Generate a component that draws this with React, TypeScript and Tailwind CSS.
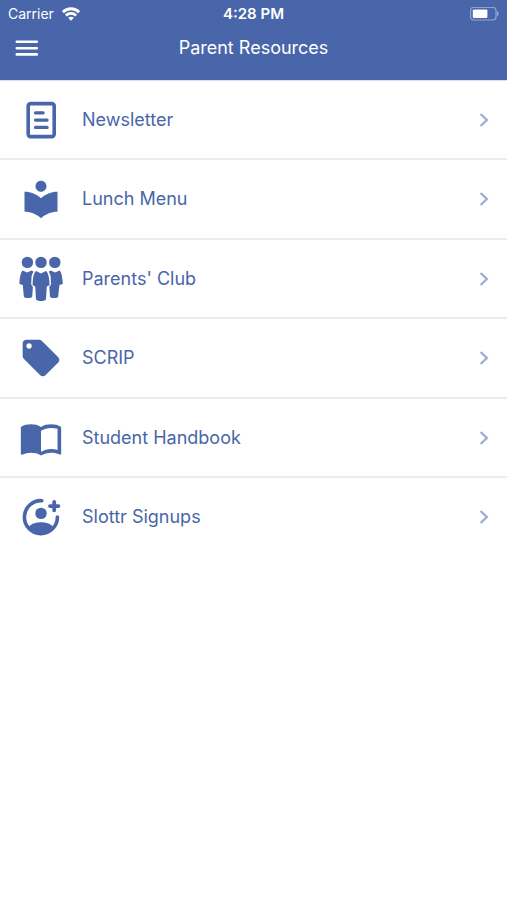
import type { ReactNode } from 'react';
import { MdImportContacts, MdLocalLibrary, MdLocalOffer } from 'react-icons/md';

type Resource = {
  label: string;
  icon: ReactNode;
};

function NewsletterIcon() {
  return (
    <svg viewBox="0 0 46 46" className="size-[46px]" fill="none" stroke="currentColor" strokeWidth="3.6" strokeLinecap="round">
      <rect x="10.2" y="6.6" width="26" height="33" rx="2.4" />
      <path d="M17.5 15.9h7.6M17.5 23.1h11.6M17.5 30.4h11.6" strokeWidth="3.2" />
    </svg>
  );
}

function ParentsIcon() {
  return (
    <svg viewBox="0 0 46 46" className="size-[46px]" fill="currentColor">
      <circle cx="9.4" cy="6.4" r="5.7" />
      <circle cx="23" cy="6.4" r="5.7" />
      <circle cx="36.8" cy="6.4" r="5.7" />
      {/* people at the sides */}
      <path d="M4.6 14.4 9.2 16.6 13.4 14.4 15.4 15.6 13.6 20 13.2 28.6 14.9 31 14.2 40.6C13.8 42.6 6.4 42.6 5.8 40.6L4.8 29 1.4 28C1.6 24 2.2 16.4 4.6 14.4Z" />
      <path d="M41.6 14.4 37 16.6 32.8 14.4 30.8 15.6 32.6 20 33 28.6 31.3 31 32 40.6C32.4 42.6 39.6 42.6 40.2 40.6L41.4 29 44.8 28C44.6 24 44 16.4 41.6 14.4Z" />
      {/* person in front */}
      <path d="M18.2 15 23 17.4 27.8 15C30.6 16.4 31.4 23 31.6 29.2L28.8 30.4 28 43.2C27.4 45.6 18.6 45.6 18 43.2L17.2 30.4 14.6 29.2C14.8 23 15.4 16.4 18.2 15Z" />
    </svg>
  );
}

function SignupIcon() {
  return (
    <svg viewBox="0 0 46 46" className="size-[46px]" fill="none" stroke="currentColor" strokeWidth="3.6" strokeLinecap="round">
      <path d="M23.8 6.7A16.5 16.5 0 1 0 39.4 23" />
      <path d="M36.2 7.9v8.4M32 12.1h8.4" strokeWidth="3.8" />
      <circle cx="23" cy="19.4" r="5.7" fill="currentColor" stroke="none" />
      <path d="M10.6 33C13 30 17.4 28.2 23 28.2S33 30 35.4 33C32.6 37.4 28 40 23 40S13.4 37.4 10.6 33Z" fill="currentColor" stroke="none" />
    </svg>
  );
}

const resources: Resource[] = [
  { label: 'Newsletter', icon: <NewsletterIcon /> },
  { label: 'Lunch Menu', icon: <MdLocalLibrary size={44} /> },
  { label: "Parents' Club", icon: <ParentsIcon /> },
  { label: 'SCRIP', icon: <MdLocalOffer size={44} /> },
  { label: 'Student Handbook', icon: <MdImportContacts size={44} /> },
  { label: 'Slottr Signups', icon: <SignupIcon /> },
];

function StatusBar() {
  return (
    <div className="grid h-7 grid-cols-[1fr_auto_1fr] items-center px-2">
      <div className="flex items-center gap-2 text-sm">
        <span>Carrier</span>
        <svg viewBox="0 0 18 14" className="h-3.5 w-[18px]" fill="none" stroke="currentColor" strokeWidth="2.8">
          <path d="M.9 5.2C5.5.6 12.5.6 17.1 5.2" />
          <path d="M3.9 8.4C6.8 5.6 11.2 5.6 14.1 8.4" />
          <path d="M9 13.8 6.1 10.8C7.8 9.3 10.2 9.3 11.9 10.8Z" fill="currentColor" stroke="none" />
        </svg>
      </div>
      <span className="text-[15px] font-semibold">4:28 PM</span>
      <svg viewBox="0 0 30 14" className="h-3.5 w-[30px] justify-self-end">
        <rect x="1.6" y=".4" width="25.4" height="12.6" rx="3" fill="none" stroke="#8fa3d0" strokeWidth="1.2" />
        <rect x="3.8" y="2.4" width="14.6" height="8.6" rx="1.2" fill="#fff" />
        <path d="M27.8 4C30.4 5 30.4 8.4 27.8 9.4Z" fill="#8fa3d0" />
      </svg>
    </div>
  );
}

export default function App() {
  return (
    <div className="min-h-screen bg-white font-[Inter,Roboto,sans-serif]">
      <header className="border-b border-[#d5def2] bg-[#4866a9] text-white">
        <StatusBar />
        <div className="grid h-[52px] grid-cols-[1fr_auto_1fr] items-start px-[15px]">
          <button type="button" aria-label="Menu" className="flex h-10 w-6 items-center">
            <svg viewBox="0 0 24 18" className="h-[18px] w-6" stroke="currentColor" strokeWidth="2.6" strokeLinecap="round">
              <path d="M1.8 2.8h20M1.8 9.2h20M1.8 15.4h20" />
            </svg>
          </button>
          <h1 className="text-lg leading-10">Parent Resources</h1>
        </div>
      </header>

      <ul className="text-[#4866a9]">
        {resources.map(({ label, icon }) => (
          <li key={label} className="h-[79px] border-b-2 border-[#ececec] last:border-transparent even:h-20">
            <a href="#" className="flex h-full items-center px-[18px]">
              <span className="flex w-[46px] justify-center">{icon}</span>
              <span className="ml-[18px] flex-1 text-lg">{label}</span>
              <svg viewBox="0 0 10 16" className="h-4 w-2.5" fill="none" stroke="#9eaed3" strokeWidth="2.4">
                <path d="M1.6 2 7.8 8 1.6 14" />
              </svg>
            </a>
          </li>
        ))}
      </ul>
    </div>
  );
}
